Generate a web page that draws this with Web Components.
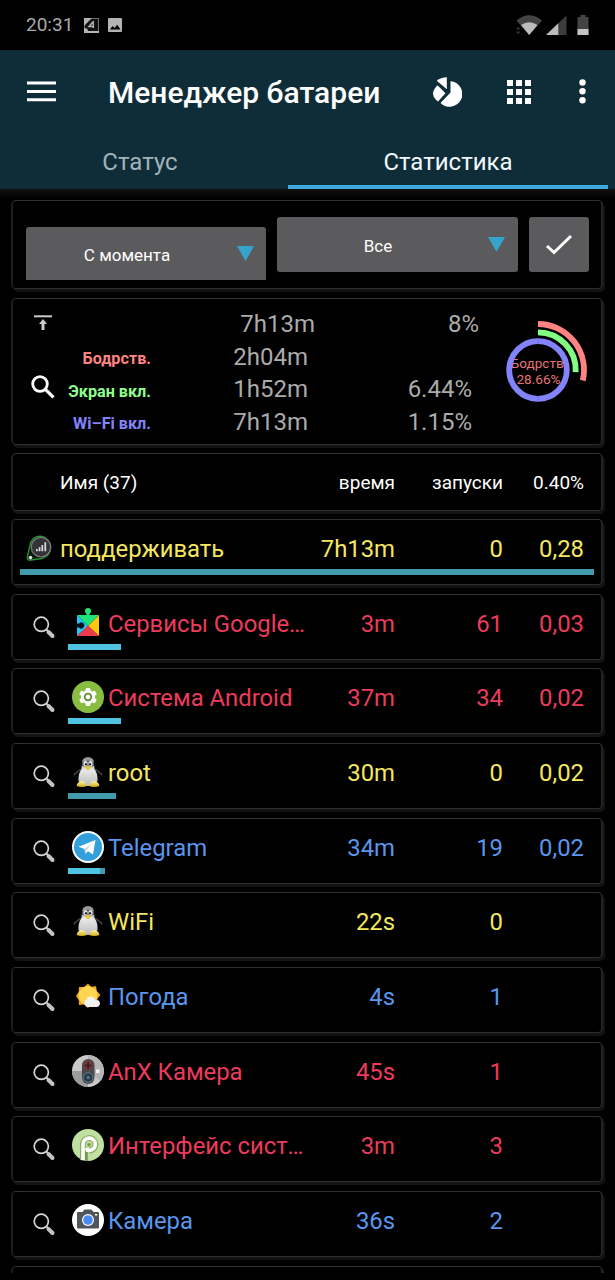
<!DOCTYPE html>
<html lang="ru">
<head>
	<meta charset="utf-8">
	<title>Менеджер батареи</title>
	<style>
		html, body { margin: 0; background: #000; }
		body { font-family: Roboto, "Liberation Sans", sans-serif; color: #fff; height: 1280px; overflow: hidden; }
	</style>
</head>
<body>

<battery-app></battery-app>

<script>
    // every element renders its markup into an open shadow root
    class Base extends HTMLElement {
        constructor() {
            super();
            this.attachShadow({mode: 'open'});
        }
        connectedCallback() {
            this.shadowRoot.innerHTML = '<style>:host{display:block;box-sizing:border-box}svg{display:block;flex:none}' + this.css() + '</style>' + this.html();
        }
        css() { return ''; }
    }

    class StatusBar extends Base {
        css() {
            return `:host{display:flex;align-items:center;height:50px;padding:0 26px;background:#000}
            .clock{font-size:19px;line-height:22px;color:#a9a9a9;margin-right:11px}
            .gap{flex:1}`;
        }
        html() {
            return `<span class="clock">20:31</span>
            <svg width="15" height="15" viewBox="0 0 15 15" style="margin-right:9px">
                <rect x=".5" y=".5" width="14" height="14" fill="#111" stroke="#858585" stroke-width=".8"/>
                <path d="M0 0H8L0 8Z" fill="#b4b4b4"/><path d="M0 15V10Q4 10 4 13H15V15Z" fill="#b4b4b4"/>
                <path d="M9.200 3V10M9.200 3.500L5 8.500H10" fill="none" stroke="#b4b4b4" stroke-width="1.500"/>
            </svg>
            <svg width="14" height="14" viewBox="0 0 14 14">
                <rect width="14" height="14" rx="1.2" fill="#b4b4b4"/><path d="M1.8 11.5L4.7 8L6.5 10L9.2 6.7L12.5 11.5Z" fill="#000"/>
            </svg>
            <span class="gap"></span>
            <svg width="73" height="20" viewBox="0 0 73 20">
                <path d="M.5 5.5Q13 -5 26 5.5L13.2 20Z" fill="#444"/>
                <path d="M5 10Q13 4.5 21.5 10L13.2 20Z" fill="#bcbcbc"/>
                <path d="M0 14.5L2.2 11.8L4.5 14.5ZM0 16.5L2.2 19.2L4.5 16.5Z" fill="#333"/>
                <path d="M30 20L50.5 .5V20Z" fill="#3c3c3c"/><path d="M30 20L42.3 8.3V20Z" fill="#bcbcbc"/>
                <path d="M61.5 2H64.5V0H69.500V2H72.500V20H61.500Z" fill="#444"/><rect x="61.500" y="14" width="11" height="6" fill="#c4c4c4"/>
            </svg>`;
        }
    }

    class AppHeader extends Base {
        css() {
            return `:host{background:#0f2d38;height:139px}
            .bar{display:flex;align-items:center;height:83px;padding:0 29px 0 27px}
            h1{margin:0 0 0 52px;flex:1;font-size:30px;line-height:34px;font-weight:500;padding-top:3px;white-space:nowrap}
            .tabs{display:flex;height:56px;padding-right:7px}
            .tab{box-sizing:border-box;flex:1;text-align:center;font-size:24px;line-height:28px;padding-top:15px;color:#a3b3ba}
            .tab:first-child{flex:0 0 280px;margin-right:8px}
            .on{color:#eff8fb;border-bottom:4px solid #3eabdf}`;
        }
        html() {
            let dots = '';
            for (let i = 0; i < 9; i++) {
                dots += `<rect x="${(i % 3) * 9}" y="${Math.floor(i / 3) * 9}" width="6" height="6"/>`;
            }
            return `<div class="bar">
                <svg width="29" height="21" viewBox="0 0 29 21"><path d="M0 2H29M0 10.500H29M0 18.700H29" stroke="#fff" stroke-width="3"/></svg>
                <h1>Менеджер батареи</h1>
                <svg width="30" height="30" viewBox="0 0 30 30" fill="#fff" style="margin-right:45px">
                    <path d="M18.500 4.200A12.800 12.800 0 1 1 8.500 26L18.500 15.500Z"/>
                    <path d="M14.800 .300V12.300L4.800 3.800Q8.800 .500 14.800 .300Z"/>
                    <path d="M5.500 8.200L13.500 16.200L6 24.600Q-3.600 17 5.500 8.200Z"/>
                </svg>
                <svg width="24" height="24" viewBox="0 0 24 24" fill="#fff" style="margin-right:48px">${dots}</svg>
                <svg width="7" height="25" viewBox="0 0 7 25" fill="#fff"><circle cx="3.500" cy="3.500" r="3.200"/><circle cx="3.500" cy="12.300" r="3.200"/><circle cx="3.500" cy="21.200" r="3.200"/></svg>
            </div>
            <div class="tabs"><div class="tab">Статус</div><div class="tab on">Статистика</div></div>`;
        }
    }

    // outlined box shared by all blocks below the header
    class CardBox extends Base {
        css() {
            return `:host{height:var(--h,66px);flex:none;border:1px solid #303030;border-left-width:2px;border-left-color:#1d1d1d;border-right:2px solid #242424;border-radius:5px;background:#000;box-shadow:2px 3px 0 #131313}`;
        }
        html() { return '<slot></slot>'; }
    }

    class DropButton extends Base {
        css() {
            return `:host{display:flex;align-items:center;width:240px;height:55px;background:#5b5b5d;border-radius:3px;font-size:17px;line-height:20px}
            span{width:202px;text-align:center;padding-top:2px}
            svg{margin-left:9px}`;
        }
        html() {
            return `<span><slot></slot></span><svg width="17" height="15" viewBox="0 0 17 15"><path d="M0 0H17L8.500 15Z" fill="#36a3cc"/></svg>`;
        }
    }

    class FilterCard extends Base {
        css() {
            return `card-box{--h:89px}
            .line{display:flex;padding:16px 0 0 13px}
            drop-button{margin-right:11px}
            .wide{width:241px}
            .low{margin-top:10px;height:53px;border-radius:3px 3px 0 0}
            .ok{display:flex;align-items:center;justify-content:center;width:60px;height:55px;background:#5b5b5d;border-radius:3px}`;
        }
        html() {
            return `<card-box><div class="line">
                <drop-button class="low">С момента</drop-button>
                <drop-button class="wide">Все</drop-button>
                <div class="ok"><svg width="28" height="22" viewBox="0 0 28 22"><path d="M2 12L9 18.500L26 2" fill="none" stroke="#fff" stroke-width="3"/></svg></div>
            </div></card-box>`;
        }
    }

    class UsageRings extends Base {
        html() {
            // outer arcs start at twelve o'clock, the inner ring is full
            const arc = (r, part, color) => {
                const a = part * Math.PI * 2;
                return `<path d="M40 ${55 - r}A${r} ${r} 0 0 1 ${40 + r * Math.sin(a)} ${55 - r * Math.cos(a)}" stroke="${color}" stroke-width="5.800" fill="none"/>`;
            };
            return `<svg width="95" height="95" viewBox="0 0 95 95">
                <g fill="#e57474" font-size="13.600" text-anchor="middle"><text x="41" y="52.800">Бодрств.</text><text x="40.500" y="68.500">28.66%</text></g>
                ${arc(46, .2866, '#ff8383')}${arc(37.7, .2587, '#83ff83')}
                <circle cx="40" cy="55" r="28.800" fill="none" stroke="#8383fb" stroke-width="5.800"/>
                <path d="M40 23.300V29M40 81V86.700" stroke="#6a6ae0" stroke-width=".8"/>
            </svg>`;
        }
    }

    class SummaryCard extends Base {
        css() {
            return `card-box{--h:147px}
            .line{display:flex;padding-top:9px}
            .icons{display:flex;flex-direction:column;align-items:center;width:45px;padding:7px 0 0 14px;box-sizing:border-box}
            .icons svg + svg{margin-top:44px}
            .labels{width:93px;text-align:right;font-size:16.200px;font-weight:700;padding-top:35px}
            .labels div{line-height:32.600px;white-space:nowrap}
            .nums{width:164px;font-size:24px;color:#ababab;text-align:right}
            .nums div{line-height:32.600px;height:32.600px;margin-right:7px}
            .nums div.first{margin-right:0}
            usage-rings{margin:7px 0 0 19px}`;
        }
        html() {
            return `<card-box><div class="line">
                <div class="icons">
                    <svg width="18" height="16" viewBox="0 0 18 16"><path d="M0 1.300H18" stroke="#ccc" stroke-width="2"/><path d="M9 4L13 9H10.500V15H7.500V9H5Z" fill="#ccc"/></svg>
                    <svg width="24" height="24" viewBox="0 0 24 24" fill="none" stroke="#fff"><circle cx="9" cy="9" r="7.300" stroke-width="2.800"/><path d="M14.500 14.500L22.500 22.300" stroke-width="3.200"/></svg>
                </div>
                <div class="labels">
                    <div style="color:#ff8383">Бодрств.</div><div style="color:#8cff8c">Экран вкл.</div><div style="color:#8383fb">Wi–Fi вкл.</div>
                </div>
                <div class="nums"><div class="first">7h13m</div><div>2h04m</div><div>1h52m</div><div>7h13m</div></div>
                <div class="nums"><div class="first">8%</div><div></div><div>6.44%</div><div>1.15%</div></div>
                <usage-rings></usage-rings>
            </div></card-box>`;
        }
    }

    class ListHeader extends Base {
        css() {
            return `card-box{--h:58px}
            .line{display:flex;font-size:19px;line-height:57px;padding:0 17px 0 47px}
            span{text-align:right;white-space:nowrap}
            .name{flex:1;text-align:left}.runs{width:108px}.pct{width:81px}`;
        }
        html() {
            return `<card-box><div class="line"><span class="name">Имя (37)</span><span>время</span><span class="runs">запуски</span><span class="pct">0.40%</span></div></card-box>`;
        }
    }

    const penguin = `<defs><linearGradient id="b" x2="0" y2="1"><stop stop-color="#8c8c8c"/><stop offset=".45" stop-color="#e8e8e8"/><stop offset="1" stop-color="#bbb"/></linearGradient>
        <linearGradient id="y" x2="0" y2="1"><stop stop-color="#fff3a0"/><stop offset="1" stop-color="#d2aa14"/></linearGradient></defs>
        <path d="M9 13Q4 17 1.500 19M23 13Q28 17 30.500 19" stroke="#383838" stroke-width="1.800" fill="none"/>
        <path d="M10 8Q10 1 16 1Q22 1 22 8L22.500 13Q26 18 25.500 25Q22 30 16 30Q10 30 6.500 25Q6 18 9.500 13Z" fill="url(#b)"/>
        <path d="M10 6Q16 3 22 6V10Q16 12 10 10Z" fill="#555a60"/><ellipse cx="13.500" cy="7.800" rx="2.100" ry="2.800" fill="#ddd"/><ellipse cx="18.500" cy="7.800" rx="2.100" ry="2.800" fill="#ddd"/>
        <circle cx="14" cy="8.300" r="1.100"/><circle cx="18" cy="8.300" r="1.100"/>
        <path d="M13 11L16 9.800L19.200 11L17 14H15Z" fill="#e8c839"/>
        <path d="M7 26Q12 23 15 30Q10 32 4.500 30Q5 27 7 26ZM25 26Q20 23 17 30Q22 32 27.500 30Q27 27 25 26Z" fill="url(#y)"/>`;

    const icons = {
        signal: `<path d="M4 14Q6 2 16 2.500A12.500 12.500 0 0 1 18 27Q12 27.500 4 29Q.800 28 1.500 25Z" fill="#0b160d" stroke="#249434" stroke-width="1.500"/>
            <circle cx="16.500" cy="14.500" r="10.700" fill="#343438" stroke="#77777d" stroke-width="1.500"/>
            <path d="M12 19V16.500M15 19V14.500M18 19V12M21.300 19V9" stroke="#ddd" stroke-width="1.900"/><circle cx="5" cy="26" r="2" fill="#ddd"/>`,
        play: `<path d="M5 8H27L16 19Z" fill="#1ce477"/><circle cx="16" cy="4" r="3" fill="#1ce477"/><path d="M14.500 5H17.500V9H14.500Z" fill="#1ce477"/>
            <path d="M5 8L16 19L5 29Z" fill="#20c8fa"/><path d="M27 8V29L16 19Z" fill="#fdc712"/><path d="M5 29L16 18.500L27 29Z" fill="#ee3b4b"/><path d="M4 16.500H7A3 3 0 1 1 7 20.500H4Z" fill="#06131a"/>`,
        android: `<circle cx="16" cy="16" r="16" fill="#89bd41"/><g fill="#fff"><circle cx="16" cy="16" r="7.200"/>
            <rect x="13.700" y="7" width="4.600" height="18" rx="1"/><rect x="13.700" y="7" width="4.600" height="18" rx="1" transform="rotate(60 16 16)"/><rect x="13.700" y="7" width="4.600" height="18" rx="1" transform="rotate(120 16 16)"/></g>
            <circle cx="16" cy="16" r="3.300" fill="#fff" stroke="#638c35" stroke-width="1.800"/>`,
        tux: penguin,
        telegram: `<circle cx="16" cy="16" r="16" fill="#fff"/><circle cx="16" cy="16" r="14" fill="#33a0dc"/><path d="M6.500 15.700L23.500 9L21 23.500L16 20.200L13.300 22.800L12.500 18Z" fill="#fff"/><path d="M12.500 18L20 12.500L14.500 19.300L13.300 22.800Z" fill="#bcd9e9"/>`,
        weather: `<path d="M16 3.500L19.200 7L24 6L24.800 11L28.500 15L25.500 18.500L25 24H19.500L16 28L12.500 24.500L7 25L6.700 20L4 16L6.700 12L7 7L12.300 7Z" fill="#efa91c"/><circle cx="16" cy="15.500" r="9.500" fill="#ffd654"/>
            <path d="M15.500 27A4 4 0 0 1 14.500 19.500Q16 15.500 20.500 17Q23 18 23.500 20Q28 19.500 28 24Q27.500 26.500 25 27Z" fill="#f1f1f1"/>`,
        anx: `<circle cx="16" cy="16" r="16" fill="#c9c9c9"/><path d="M16 0A16 16 0 0 1 28 26L16 16Z" fill="#b5b5b5"/><path d="M0 16H16V32A16 16 0 0 1 0 16Z" fill="#9c9c9c"/>
            <rect x="10" y="4" width="12.500" height="25" rx="6.200" fill="#48494d"/><circle cx="16.200" cy="10.500" r="5" fill="#713c40"/><path d="M12.500 10.500H20M16.200 7V14" stroke="#3a1c1e" stroke-width="1.700"/>
            <circle cx="16.200" cy="22.500" r="4.700" fill="#203642" stroke="#67818e"/><circle cx="16.200" cy="22.500" r="2" fill="#466b7d"/><rect x="24" y="14.500" width="3.500" height="3.500" fill="#f4f4f4"/>`,
        pie: `<circle cx="16" cy="16" r="16" fill="#c0dfa0"/><path d="M11 31V16A6.200 6.200 0 1 1 17.200 21.500" fill="none" stroke="#89ac62" stroke-width="6"/>
            <path d="M11 31.200V16A6.200 6.200 0 1 1 17.200 21.500Q14.800 21.500 14.800 19" fill="none" stroke="#fff" stroke-width="3.600"/><path d="M14.500 23V32" stroke="#719a50" stroke-width="2.500"/><circle cx="17" cy="15.800" r="1.800" fill="#719a50"/>`,
        camera: `<circle cx="16" cy="16" r="16" fill="#fff"/><path d="M5 9Q5 8 6 8H10.500L12.500 5.500H19.500L21.500 8H26Q27 8 27 9V23.500Q27 24.500 26 24.500H6Q5 24.500 5 23.500Z" fill="#50545b"/>
            <circle cx="16" cy="16" r="6" fill="#fff"/><circle cx="16" cy="16" r="4.800" fill="#488af0"/><rect x="23" y="10" width="2.200" height="1.500" fill="#fff"/>`
    };

    class AppRow extends Base {
        css() {
            return `.line{display:flex;height:49px;box-sizing:border-box;font-size:23.850px;line-height:28px;padding:15px 17px 0 19px}
            .find{margin:5px 16px 0 0}
            .icon{margin:-3px 4px 0 0}
            :host([wide]) .line{padding-left:13px}
            :host([wide]) .icon{margin-right:5px;margin-top:-1px}
            span{text-align:right;white-space:nowrap}
            .name{flex:1;text-align:left}.runs{width:108px}.pct{width:81px}
            .use{display:flex;margin-left:55px;height:6px}
            :host([wide]) .use{margin:0 7px 0 7px}
            .a{background:#50c3e3}.b{background:#439aac}`;
        }
        html() {
            const g = n => this.getAttribute(n) || '';
            const wide = this.hasAttribute('wide');
            const colors = {red: '#ec3b5c', yellow: '#f5e75e', blue: '#5996ee'};
            const find = `<svg class="find" width="24" height="24" viewBox="0 0 24 24" fill="none"><circle cx="9.300" cy="9.300" r="7.100" stroke="#d6d6d6" stroke-width="1.700"/><path d="M14 14L17.500 17.500" stroke="#ccc" stroke-width="2"/><path d="M16.500 17L20.500 21" stroke="#c4c4c4" stroke-width="4" stroke-linecap="round"/></svg>`;
            const size = wide ? 29 : 32;
            const [a, b] = g('bar').split(' ');
            return `<card-box><div class="line" style="color:${colors[g('tone')]}">
                ${wide ? '' : find}
                <svg class="icon" width="${size}" height="${size}" viewBox="0 0 32 32">${icons[g('icon')] || ''}</svg>
                <span class="name">${g('name')}</span><span>${g('time')}</span><span class="runs">${g('runs')}</span><span class="pct">${g('pct')}</span>
            </div><div class="use"><div class="a" style="width:${a || 0}px"></div><div class="b" style="${wide ? 'flex:1' : 'width:' + (b || 0) + 'px'}"></div></div></card-box>`;
        }
    }

    class BatteryApp extends Base {
        css() {
            return `:host{width:615px;height:1273px;overflow:hidden}
            main{display:flex;flex-direction:column;padding:11px 12px 0 11px;height:1073px;background:linear-gradient(#111,#000 9px)}
            main > *{flex:none}
            filter-card{margin-bottom:9px}
            summary-card{margin-bottom:8px}
            list-header{margin-bottom:8px}
            app-row{margin-bottom:8.670px}`;
        }
        html() {
            return `<status-bar></status-bar>
            <app-header></app-header>
            <main>
                <filter-card></filter-card>
                <summary-card></summary-card>
                <list-header></list-header>
                <app-row wide icon="signal" tone="yellow" name="поддерживать" time="7h13m" runs="0" pct="0,28"></app-row>
                <app-row icon="play" tone="red" name="Сервисы Google…" time="3m" runs="61" pct="0,03" bar="53"></app-row>
                <app-row icon="android" tone="red" name="Система Android" time="37m" runs="34" pct="0,02" bar="53"></app-row>
                <app-row icon="tux" tone="yellow" name="root" time="30m" runs="0" pct="0,02" bar="0 48"></app-row>
                <app-row icon="telegram" tone="blue" name="Telegram" time="34m" runs="19" pct="0,02" bar="32 5"></app-row>
                <app-row icon="tux" tone="yellow" name="WiFi" time="22s" runs="0"></app-row>
                <app-row icon="weather" tone="blue" name="Погода" time="4s" runs="1"></app-row>
                <app-row icon="anx" tone="red" name="AnX Камера" time="45s" runs="1"></app-row>
                <app-row icon="pie" tone="red" name="Интерфейс сист…" time="3m" runs="3"></app-row>
                <app-row icon="camera" tone="blue" name="Камера" time="36s" runs="2"></app-row>
                <card-box></card-box>
            </main>`;
        }
    }

    customElements.define('card-box', CardBox);
    customElements.define('drop-button', DropButton);
    customElements.define('usage-rings', UsageRings);
    customElements.define('status-bar', StatusBar);
    customElements.define('app-header', AppHeader);
    customElements.define('filter-card', FilterCard);
    customElements.define('summary-card', SummaryCard);
    customElements.define('list-header', ListHeader);
    customElements.define('app-row', AppRow);
    customElements.define('battery-app', BatteryApp);
</script>
</body>
</html>
